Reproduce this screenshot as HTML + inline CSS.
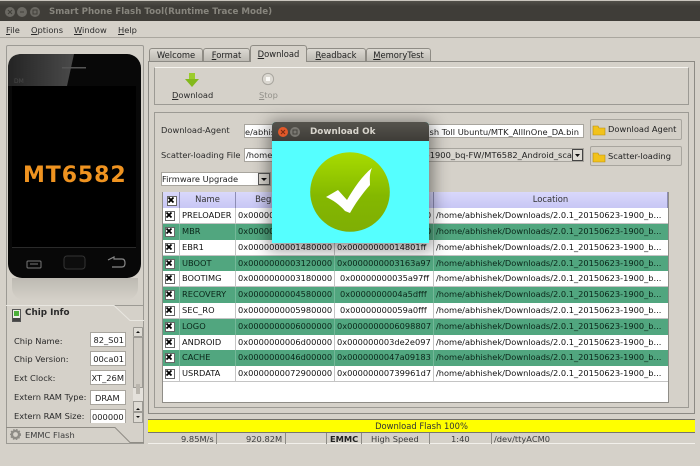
<!DOCTYPE html>
<html><head><meta charset="utf-8">
<style>
html,body{margin:0;padding:0;width:700px;height:466px;overflow:hidden;background:#d5d1c9}
#r{position:absolute;left:0;top:0;width:700px;height:466px;overflow:hidden;background:#d5d1c9;font-family:"DejaVu Sans",sans-serif;font-size:8.3px;color:#2b2b2b;filter:blur(.3px)}
#r div,#r span.t,#r svg{position:absolute}
.t{white-space:nowrap;line-height:12px}
u{text-decoration:underline}
.box{box-sizing:border-box;border:1px solid #9c9a94}
.tab{box-sizing:border-box;border:1px solid #8f8c85;border-bottom:0;border-radius:3px 3px 0 0;background:linear-gradient(#dcd9d2,#bdbab3);text-align:center;line-height:13px;font-size:8.4px;color:#222}
.inp{box-sizing:border-box;background:#fff;border:1px solid #a8a59e;overflow:hidden;white-space:nowrap;line-height:12px;color:#222}
.btn{box-sizing:border-box;background:#d3cfc7;border:1px solid #a8a59e;border-radius:2px;line-height:18px;color:#222;white-space:nowrap}
.row{left:0;width:506px;height:16px;background:#fff;border-bottom:1px solid #c4c4c4;box-sizing:border-box;line-height:15px;font-size:8.25px;color:#111}
.g{background:#51a67f;color:#0a2619;border-bottom:1px solid #51a67f}
.row span{position:absolute;top:0;white-space:nowrap;line-height:15px}
.ck{left:2px;top:3px;width:8px;height:8px;background:#fff;border:.5px solid #666}
.cd{top:0;width:1px;height:16px;background:#c4c4c4}
.g .cd{background:#74b898}
.hd{top:0;height:16px;box-sizing:border-box;background:linear-gradient(#d9d8fb,#c7c6f4);border-right:1px solid #8d8db5;text-align:center;line-height:15px;color:#333;font-size:8.4px}
.sd{top:433px;width:1px;height:11px;background:#8c8a84}
.l{font-size:8.3px;color:#2a2a2a}
</style></head><body>
<div id="r">
<!-- top title bar -->
<div style="left:0;top:0;width:700px;height:21px;background:linear-gradient(#55534d,#3f3d38 30%,#3f3d38)"></div>
<div style="left:0;top:0;width:700px;height:1px;background:#c9c5bd"></div>
<svg style="left:0;top:0" width="45" height="21"><circle cx="10" cy="12" r="5" fill="#6b6963"/><circle cx="22" cy="12" r="5" fill="#6b6963"/><circle cx="35" cy="12" r="5" fill="#6b6963"/><path d="M8 10l4 4M12 10l-4 4" stroke="#403e39" stroke-width="1"/><path d="M20 12h4" stroke="#403e39"/><rect x="33" y="10" width="4" height="4" fill="none" stroke="#403e39"/></svg>
<span class="t" style="left:49px;top:6px;font-size:8.7px;font-weight:bold;color:#87857d">Smart Phone Flash Tool(Runtime Trace Mode)</span>
<!-- menu -->
<span class="t" style="left:6px;top:24px"><u>F</u>ile</span>
<span class="t" style="left:31px;top:24px"><u>O</u>ptions</span>
<span class="t" style="left:74px;top:24px"><u>W</u>indow</span>
<span class="t" style="left:118px;top:24px"><u>H</u>elp</span>
<div style="left:0;top:37px;width:700px;height:1px;background:#aaa79f"></div>

<!-- phone panel -->
<div class="box" style="left:6px;top:45px;width:138px;height:262px;border-radius:2px 2px 0 0"></div>
<div style="left:12px;top:278px;width:126px;height:22px;background:linear-gradient(#bdbab3,#d5d1c9);border-radius:0 0 12px 12px"></div>
<svg style="left:7px;top:53px" width="136" height="228">
<defs><linearGradient id="sh" x1="0" y1="0" x2="1" y2="0"><stop offset="0" stop-color="#242424"/><stop offset="1" stop-color="#4a4a4a"/></linearGradient></defs>
<rect x="1" y="1" width="133" height="224" rx="14" fill="#080808"/>
<path d="M1 33V15Q1 1 15 1H67L60 33Z" fill="url(#sh)"/>
<rect x="5" y="33" width="124" height="161" fill="#000"/>
<rect x="55" y="14" width="24" height="1.5" fill="#555"/>
<rect x="5" y="194" width="124" height="1" fill="#2a2a2a"/>
<rect x="20" y="208" width="14" height="7" rx="1" fill="none" stroke="#777" stroke-width="1"/><path d="M23 211h8" stroke="#777"/>
<rect x="57" y="203" width="21" height="13" rx="3" fill="#0d0d0d" stroke="#333"/>
<path d="M101 207l6-3v2h8q3 0 3 4t-3 4h-10" fill="none" stroke="#888" stroke-width="1.2"/>
</svg>
<span class="t" style="left:14px;top:76px;font-size:6px;color:#4a4a4a">DM</span>
<span class="t" style="left:23px;top:168px;line-height:16px;font-size:22px;font-weight:bold;color:#ef9320;letter-spacing:.9px">MT6582</span>

<!-- chip panel -->
<div class="box" style="left:6px;top:305px;width:138px;height:139px;background:#d5d1c9"></div>
<svg style="left:6px;top:305px" width="138" height="139" fill="none"><path d="M0 .5H108L124 15.5H138" stroke="#e9e7e1"/><path d="M0 122.5H109L124 137.5H138" stroke="#8f8c85"/></svg>
<svg style="left:12px;top:309px" width="9" height="13"><rect x=".5" y=".5" width="8" height="12" fill="#eeeeea" stroke="#555"/><rect x="2" y="2" width="5" height="5" fill="#4caf3a"/><rect x="1" y="9" width="7" height="3" fill="#444"/></svg>
<span class="t" style="left:25px;top:307px;font-weight:bold;font-size:8.8px">Chip Info</span>
<span class="t l" style="left:14px;top:335px">Chip Name:</span>
<span class="t l" style="left:14px;top:353px">Chip Version:</span>
<span class="t l" style="left:14px;top:372px">Ext Clock:</span>
<span class="t l" style="left:14px;top:391px">Extern RAM Type:</span>
<span class="t l" style="left:14px;top:410px">Extern RAM Size:</span>
<div class="inp" style="left:90px;top:332px;width:36px;height:15px;line-height:14px;text-align:right"><span class="t" style="right:1px;top:1px">82_S01</span></div>
<div class="inp" style="left:90px;top:351px;width:36px;height:15px"><span class="t" style="right:1px;top:1px">00ca01</span></div>
<div class="inp" style="left:90px;top:370px;width:36px;height:15px"><span class="t" style="right:1px;top:1px">XT_26M</span></div>
<div class="inp" style="left:90px;top:390px;width:36px;height:15px"><span class="t" style="left:4px;top:1px">DRAM</span></div>
<div class="inp" style="left:90px;top:409px;width:36px;height:14px;border-bottom:0"><span class="t" style="left:1px;top:1px">000000</span></div>
<!-- scrollbar -->
<div class="box" style="left:133px;top:327px;width:10px;height:10px;background:#dedbd4;border-radius:1px"></div>
<div class="box" style="left:133px;top:337px;width:10px;height:51px;background:#d0ccc4"></div>
<div style="left:133px;top:388px;width:10px;height:13px;background:#e4e1db"></div>
<div class="box" style="left:133px;top:401px;width:10px;height:11px;background:#dedbd4"></div>
<div class="box" style="left:133px;top:412px;width:10px;height:11px;background:#dedbd4"></div>
<svg style="left:133px;top:327px" width="10" height="96" fill="#111"><path d="M3 6l2-2 2 2zM3 83l2-2 2 2zM3 89l2 2 2-2z"/><rect x="3" y="57" width="4" height="10" fill="#b9b5ad"/></svg>
<svg style="left:10px;top:429px" width="11" height="11"><circle cx="5.5" cy="5.5" r="3.6" fill="none" stroke="#8e8c86" stroke-width="2.4"/><circle cx="5.5" cy="5.5" r="5" fill="none" stroke="#8e8c86" stroke-width="1.2" stroke-dasharray="1.5 1.5"/></svg>
<span class="t" style="left:25px;top:429px;color:#3d3d3d">EMMC Flash</span>

<!-- tabs -->
<div class="tab" style="left:149px;top:48px;width:54px;height:13px">Welcome</div>
<div class="tab" style="left:203px;top:48px;width:47px;height:13px"><u>F</u>ormat</div>
<div class="tab" style="left:306px;top:48px;width:60px;height:13px"><u>R</u>eadback</div>
<div class="tab" style="left:366px;top:48px;width:65px;height:13px"><u>M</u>emoryTest</div>
<!-- main panel -->
<div class="box" style="left:148px;top:61px;width:547px;height:353px;border-color:#8c8a84"></div>
<div class="tab" style="left:250px;top:45px;width:57px;height:17px;background:#d5d1c9;line-height:16px;z-index:1"><u>D</u>ownload</div>
<div class="box" style="left:154px;top:67px;width:535px;height:38px;border-top-color:#f5f3ee"></div>
<div class="box" style="left:154px;top:112px;width:535px;height:296px"></div>
<!-- toolbar -->
<svg style="left:184px;top:72px" width="16" height="16"><path d="M5 1h6v6h4l-7 8-7-8h4z" fill="#83b91c"/><path d="M5 1h6v6H5z" fill="#9ccc2c"/></svg>
<span class="t" style="left:172px;top:89px"><u>D</u>ownload</span>
<svg style="left:261px;top:72px" width="14" height="14"><circle cx="7" cy="7" r="5.6" fill="#dbd8d1" stroke="#a9a69f"/><rect x="5" y="5" width="4" height="4" fill="#fbfaf7"/></svg>
<span class="t" style="left:259px;top:89px;color:#92908a"><u>S</u>top</span>

<!-- form -->
<span class="t" style="left:161px;top:124px">Download-Agent</span>
<span class="t" style="left:161px;top:149px">Scatter-loading File</span>
<div class="inp" style="left:244px;top:124px;width:340px;height:14px"><span class="t" style="left:0;top:1px">e/abhishek</span><span class="t" style="right:4px;top:1px">ash Toll Ubuntu/MTK_AllInOne_DA.bin</span></div>
<div class="inp" style="left:244px;top:148px;width:340px;height:14px;background:linear-gradient(90deg,#fff 30px,#d9d6cf 60px)"><span class="t" style="left:1px;top:0">/home/</span><span class="t" style="right:11px;top:0">-1900_bq-FW/MT6582_Android_sca</span></div>
<div class="box" style="left:572px;top:149px;width:11px;height:12px;background:#dedbd4;border-color:#444"></div>
<svg style="left:572px;top:149px" width="11" height="12"><path d="M3 5h5l-2.500 3z" fill="#111"/></svg>
<div class="btn" style="left:590px;top:119px;width:92px;height:21px;padding-left:17px;line-height:19px">Download Agent</div>
<div class="btn" style="left:590px;top:146px;width:92px;height:20px;padding-left:17px;line-height:19px">Scatter-loading</div>
<svg style="left:592px;top:124px" width="14" height="12"><path d="M1 2h5l1 2h6v7H1z" fill="#f2c21b" stroke="#b58e10" stroke-width=".6"/></svg>
<svg style="left:592px;top:151px" width="14" height="12"><path d="M1 2h5l1 2h6v7H1z" fill="#f2c21b" stroke="#b58e10" stroke-width=".6"/></svg>
<div class="inp" style="left:161px;top:172px;width:110px;height:14px"><span class="t" style="left:0;top:0">Firmware Upgrade</span></div>
<div class="box" style="left:258px;top:173px;width:12px;height:12px;background:#d8d5ce;border-color:#555"></div>
<svg style="left:258px;top:173px" width="12" height="12"><path d="M3 5h6l-3 3z" fill="#111"/></svg>

<!-- table -->
<div style="left:162px;top:192px;width:507px;height:211px;background:#fff;border:1px solid #8f8d87;box-sizing:border-box"></div>
<div style="left:163px;top:192px;width:505px;height:209px;overflow:hidden">
 <div class="hd" style="left:0;width:17px"><div class="ck" style="left:4px;top:4px"></div><svg style="left:4px;top:4px" width="8" height="8"><path d="M1.500 1.500l5 5M6.500 1.500l-5 5" stroke="#000" stroke-width="1.800"/></svg></div>
 <div class="hd" style="left:17px;width:56px">Name</div>
 <div class="hd" style="left:73px;width:99px">Begin Address</div>
 <div class="hd" style="left:172px;width:99px">End Address</div>
 <div class="hd" style="left:271px;width:234px">Location</div>

 <div class="row" style="top:16px"><div class="ck"></div><svg style="left:2px;top:3px" width="8" height="8"><path d="M1.500 1.500l5 5M6.500 1.500l-5 5" stroke="#000" stroke-width="1.800"/></svg><div class="cd" style="left:16px"></div><div class="cd" style="left:72px"></div><div class="cd" style="left:171px"></div><div class="cd" style="left:270px"></div><span style="left:19px">PRELOADER</span><span style="left:75px">0x0000000000000000</span><span style="left:174px">0x0000000000040000</span><span style="left:273px">/home/abhishek/Downloads/2.0.1_20150623-1900_b...</span></div>
 <div class="row g" style="top:31.800px"><div class="ck"></div><svg style="left:2px;top:3px" width="8" height="8"><path d="M1.500 1.500l5 5M6.500 1.500l-5 5" stroke="#000" stroke-width="1.800"/></svg><div class="cd" style="left:16px"></div><div class="cd" style="left:72px"></div><div class="cd" style="left:171px"></div><div class="cd" style="left:270px"></div><span style="left:19px">MBR</span><span style="left:75px">0x0000000001400000</span><span style="left:174px">0x0000000001480000</span><span style="left:273px">/home/abhishek/Downloads/2.0.1_20150623-1900_b...</span></div>
 <div class="row" style="top:47.700px"><div class="ck"></div><svg style="left:2px;top:3px" width="8" height="8"><path d="M1.500 1.500l5 5M6.500 1.500l-5 5" stroke="#000" stroke-width="1.800"/></svg><div class="cd" style="left:16px"></div><div class="cd" style="left:72px"></div><div class="cd" style="left:171px"></div><div class="cd" style="left:270px"></div><span style="left:19px">EBR1</span><span style="left:75px">0x0000000001480000</span><span style="left:174px">0x00000000014801ff</span><span style="left:273px">/home/abhishek/Downloads/2.0.1_20150623-1900_b...</span></div>
 <div class="row g" style="top:63.500px"><div class="ck"></div><svg style="left:2px;top:3px" width="8" height="8"><path d="M1.500 1.500l5 5M6.500 1.500l-5 5" stroke="#000" stroke-width="1.800"/></svg><div class="cd" style="left:16px"></div><div class="cd" style="left:72px"></div><div class="cd" style="left:171px"></div><div class="cd" style="left:270px"></div><span style="left:19px">UBOOT</span><span style="left:75px">0x0000000003120000</span><span style="left:174px">0x0000000003163a97</span><span style="left:273px">/home/abhishek/Downloads/2.0.1_20150623-1900_b...</span></div>
 <div class="row" style="top:79.300px"><div class="ck"></div><svg style="left:2px;top:3px" width="8" height="8"><path d="M1.500 1.500l5 5M6.500 1.500l-5 5" stroke="#000" stroke-width="1.800"/></svg><div class="cd" style="left:16px"></div><div class="cd" style="left:72px"></div><div class="cd" style="left:171px"></div><div class="cd" style="left:270px"></div><span style="left:19px">BOOTIMG</span><span style="left:75px">0x0000000003180000</span><span style="left:177px">0x00000000035a97ff</span><span style="left:273px">/home/abhishek/Downloads/2.0.1_20150623-1900_b...</span></div>
 <div class="row g" style="top:95.100px"><div class="ck"></div><svg style="left:2px;top:3px" width="8" height="8"><path d="M1.500 1.500l5 5M6.500 1.500l-5 5" stroke="#000" stroke-width="1.800"/></svg><div class="cd" style="left:16px"></div><div class="cd" style="left:72px"></div><div class="cd" style="left:171px"></div><div class="cd" style="left:270px"></div><span style="left:19px">RECOVERY</span><span style="left:75px">0x0000000004580000</span><span style="left:177px">0x0000000004a5dfff</span><span style="left:273px">/home/abhishek/Downloads/2.0.1_20150623-1900_b...</span></div>
 <div class="row" style="top:110.900px"><div class="ck"></div><svg style="left:2px;top:3px" width="8" height="8"><path d="M1.500 1.500l5 5M6.500 1.500l-5 5" stroke="#000" stroke-width="1.800"/></svg><div class="cd" style="left:16px"></div><div class="cd" style="left:72px"></div><div class="cd" style="left:171px"></div><div class="cd" style="left:270px"></div><span style="left:19px">SEC_RO</span><span style="left:75px">0x0000000005980000</span><span style="left:177px">0x00000000059a0fff</span><span style="left:273px">/home/abhishek/Downloads/2.0.1_20150623-1900_b...</span></div>
 <div class="row g" style="top:126.700px"><div class="ck"></div><svg style="left:2px;top:3px" width="8" height="8"><path d="M1.500 1.500l5 5M6.500 1.500l-5 5" stroke="#000" stroke-width="1.800"/></svg><div class="cd" style="left:16px"></div><div class="cd" style="left:72px"></div><div class="cd" style="left:171px"></div><div class="cd" style="left:270px"></div><span style="left:19px">LOGO</span><span style="left:75px">0x0000000006000000</span><span style="left:174px">0x0000000006098807</span><span style="left:273px">/home/abhishek/Downloads/2.0.1_20150623-1900_b...</span></div>
 <div class="row" style="top:142.500px"><div class="ck"></div><svg style="left:2px;top:3px" width="8" height="8"><path d="M1.500 1.500l5 5M6.500 1.500l-5 5" stroke="#000" stroke-width="1.800"/></svg><div class="cd" style="left:16px"></div><div class="cd" style="left:72px"></div><div class="cd" style="left:171px"></div><div class="cd" style="left:270px"></div><span style="left:19px">ANDROID</span><span style="left:75px">0x0000000006d00000</span><span style="left:174px">0x000000003de2e097</span><span style="left:273px">/home/abhishek/Downloads/2.0.1_20150623-1900_b...</span></div>
 <div class="row g" style="top:158.300px"><div class="ck"></div><svg style="left:2px;top:3px" width="8" height="8"><path d="M1.500 1.500l5 5M6.500 1.500l-5 5" stroke="#000" stroke-width="1.800"/></svg><div class="cd" style="left:16px"></div><div class="cd" style="left:72px"></div><div class="cd" style="left:171px"></div><div class="cd" style="left:270px"></div><span style="left:19px">CACHE</span><span style="left:75px">0x0000000046d00000</span><span style="left:174px">0x0000000047a09183</span><span style="left:273px">/home/abhishek/Downloads/2.0.1_20150623-1900_b...</span></div>
 <div class="row" style="top:174.100px"><div class="ck"></div><svg style="left:2px;top:3px" width="8" height="8"><path d="M1.500 1.500l5 5M6.500 1.500l-5 5" stroke="#000" stroke-width="1.800"/></svg><div class="cd" style="left:16px"></div><div class="cd" style="left:72px"></div><div class="cd" style="left:171px"></div><div class="cd" style="left:270px"></div><span style="left:19px">USRDATA</span><span style="left:75px">0x0000000072900000</span><span style="left:174px">0x00000000739961d7</span><span style="left:273px">/home/abhishek/Downloads/2.0.1_20150623-1900_b...</span></div>
</div>

<!-- progress -->
<div style="left:148px;top:419px;width:547px;height:14px;background:#ff0;border-top:1px solid #6f6d68;border-bottom:1px solid #77756f;box-sizing:border-box;text-align:center;line-height:12px;color:#333;font-size:8.400px">Download Flash 100%</div>
<div style="left:148px;top:443px;width:547px;height:1px;background:#f2f0eb"></div>
<span class="t" style="left:181px;top:433px;color:#3c3c3c">9.85M/s</span>
<div class="sd" style="left:216px"></div>
<span class="t" style="left:246px;top:433px;color:#3c3c3c">920.82M</span>
<div class="sd" style="left:285px"></div>
<div class="sd" style="left:326px"></div>
<span class="t" style="left:330px;top:433px;font-weight:bold;color:#222">EMMC</span>
<div class="sd" style="left:361px"></div>
<span class="t" style="left:371px;top:433px;color:#3c3c3c">High Speed</span>
<div class="sd" style="left:429px"></div>
<span class="t" style="left:451px;top:433px;color:#3c3c3c">1:40</span>
<div class="sd" style="left:491px"></div>
<span class="t" style="left:494px;top:433px;color:#3c3c3c">/dev/ttyACM0</span>

<!-- dialog -->
<div style="left:272px;top:122px;width:157px;height:121px;box-shadow:0 3px 16px 4px rgba(0,0,0,.42);border-radius:4px 4px 0 0;background:#55ffff"></div>
<div style="left:272px;top:122px;width:157px;height:19px;background:linear-gradient(#55534d,#3e3c37);border-radius:4px 4px 0 0"></div>
<svg style="left:272px;top:122px" width="40" height="19"><circle cx="11" cy="10" r="5" fill="#e2592a"/><path d="M9 8l4 4M13 8l-4 4" stroke="#7a2a10"/><circle cx="23" cy="10" r="5" fill="#7a7872"/><rect x="21" y="8" width="4" height="4" fill="none" stroke="#45433e"/></svg>
<span class="t" style="left:310px;top:126px;font-weight:bold;font-size:8.800px;color:#d8d5cd">Download Ok</span>
<svg style="left:310px;top:152px" width="80" height="80">
<defs><linearGradient id="cg" x1="0" y1="0" x2="0" y2="1"><stop offset="0" stop-color="#a8dc00"/><stop offset=".55" stop-color="#84b800"/><stop offset="1" stop-color="#7fae04"/></linearGradient></defs>
<circle cx="40" cy="40" r="39.800" fill="url(#cg)"/>
<path d="M16 45 28 38 37 48C44 36 52 24 62 16 59 22 60 28 60 33 52 42 45 52 40 61L35 59C30 53 23 48 16 45Z" fill="#fff"/>
</svg>
</div>
</body></html>
